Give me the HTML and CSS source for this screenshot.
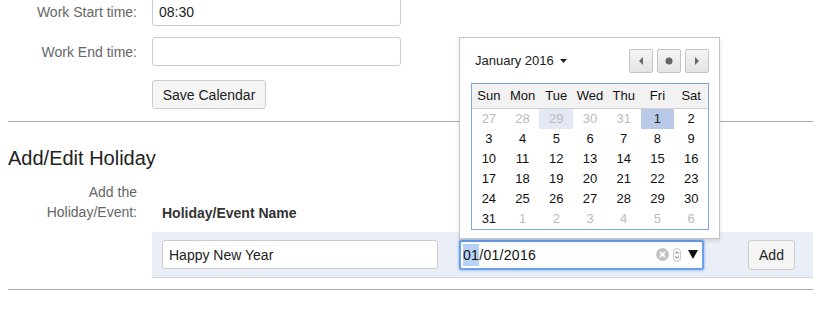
FILE: index.html
```html
<!DOCTYPE html>
<html>
<head>
<meta charset="utf-8">
<link rel="stylesheet" href="styles.css">
</head>
<body>
<div class="page">
  <div class="form-row first">
    <label class="lbl">Work Start time:</label>
    <div class="field"><input class="txt wide" type="text" value="08:30"></div>
  </div>
  <div class="form-row">
    <label class="lbl">Work End time:</label>
    <div class="field"><input class="txt wide" type="text" value=""></div>
  </div>
  <div class="form-row btn-row">
    <span class="lbl"></span>
    <div class="field"><button class="btn save">Save Calendar</button></div>
  </div>
  <hr class="rule top-rule">
  <h2 class="title">Add/Edit Holiday</h2>
  <div class="holiday">
    <div class="lbl two-line">Add the<br>Holiday/Event:</div>
    <div class="tbl">
      <div class="th">Holiday/Event Name</div>
      <div class="tr">
        <input class="txt name" type="text" value="Happy New Year">
        <div class="date-wrap">
          <div class="date"><span class="sel">01</span>/01/2016
            <span class="ctrls">
              <span class="clear"><svg width="13" height="13" viewBox="0 0 12 12"><circle cx="6" cy="6" r="6" fill="#c4c4c4"/><path d="M3.8 3.8 8.2 8.2M8.2 3.8 3.8 8.2" stroke="#fff" stroke-width="1.6"/></svg></span>
              <span class="spin"><svg width="8" height="14" viewBox="0 0 8 14"><rect x="0.5" y="0.5" width="7" height="13" rx="3.5" fill="#fafafa" stroke="#c8c8c8"/><path d="M2.3 5.5 4 3.8 5.7 5.5M2.3 8.5 4 10.2 5.7 8.5" fill="none" stroke="#555" stroke-width="0.9"/></svg></span>
              <span class="drop"><svg width="10" height="9" viewBox="0 0 10 9"><path d="M0 0h10L5 9z" fill="#111"/></svg></span>
            </span>
          </div>
          <div class="popup">
            <div class="pop-head">
              <span class="month">January 2016 <svg width="7" height="4" viewBox="0 0 7 4"><path d="M0 0h7L3.5 4z" fill="#222"/></svg></span>
              <span class="navs">
                <span class="nav"><svg width="6" height="8" viewBox="0 0 6 8"><path d="M5 0v8L1 4z" fill="#666"/></svg></span>
                <span class="nav mid"><svg width="8" height="8" viewBox="0 0 8 8"><circle cx="4" cy="4" r="3.5" fill="#666"/></svg></span>
                <span class="nav"><svg width="6" height="8" viewBox="0 0 6 8"><path d="M1 0v8L5 4z" fill="#666"/></svg></span>
              </span>
            </div>
            <div class="grid">
              <div class="wk head"><span>Sun</span><span>Mon</span><span>Tue</span><span>Wed</span><span>Thu</span><span>Fri</span><span>Sat</span></div>
              <div class="wk"><span class="o">27</span><span class="o">28</span><span class="o hov">29</span><span class="o">30</span><span class="o">31</span><span class="cur">1</span><span>2</span></div>
              <div class="wk"><span>3</span><span>4</span><span>5</span><span>6</span><span>7</span><span>8</span><span>9</span></div>
              <div class="wk"><span>10</span><span>11</span><span>12</span><span>13</span><span>14</span><span>15</span><span>16</span></div>
              <div class="wk"><span>17</span><span>18</span><span>19</span><span>20</span><span>21</span><span>22</span><span>23</span></div>
              <div class="wk"><span>24</span><span>25</span><span>26</span><span>27</span><span>28</span><span>29</span><span>30</span></div>
              <div class="wk"><span>31</span><span class="o">1</span><span class="o">2</span><span class="o">3</span><span class="o">4</span><span class="o">5</span><span class="o">6</span></div>
            </div>
          </div>
        </div>
        <button class="btn add">Add</button>
      </div>
    </div>
  </div>
  <hr class="rule bottom-rule">
</div>
</body>
</html>
```

FILE: styles.css
```css
* { box-sizing: border-box; }
html, body { margin: 0; padding: 0; background: #fff; }
body {
  font-family: "Liberation Sans", Arial, Helvetica, sans-serif;
  font-size: 14px;
  color: #333;
  overflow: hidden;
  width: 813px;
  height: 309px;
}
.page { margin-top: -3px; }
.form-row {
  display: flex;
  align-items: center;
  gap: 15px;
  margin-bottom: 11px;
}
.lbl {
  width: 137px;
  text-align: right;
  color: #666;
  font-size: 14px;
  flex: none;
}
.txt {
  font-family: inherit;
  font-size: 14px;
  color: #222;
  height: 29px;
  border: 1px solid #ccc;
  border-radius: 3px;
  padding: 0 6px;
  background: #fff;
  outline: none;
}
.wide { width: 249px; display: block; }
.btn-row { margin-bottom: 0; margin-top: 14px; }
.btn {
  font-family: inherit;
  font-size: 14px;
  color: #222;
  height: 30px;
  border: 1px solid #ccc;
  border-radius: 3px;
  background: #f5f5f5;
  padding: 0;
  display: block;
  white-space: nowrap;
}
.save { width: 114px; height: 29px; }
.rule {
  border: 0;
  border-top: 1px solid #a8a8a8;
  margin: 0 0 0 8px;
  height: 0;
}
.top-rule { margin-top: 12px; }
.title {
  font-weight: normal;
  font-size: 20px;
  color: #222;
  margin: 24px 0 0 8px;
  line-height: 24px;
}
.holiday {
  display: flex;
  gap: 15px;
  margin-top: 12px;
}
.two-line { line-height: 20px; padding-top: 0; }
.tbl { flex: 1; }
.th {
  font-weight: bold;
  color: #333;
  padding: 22px 0 0 10px;
  line-height: 18px;
  height: 50px;
}
.tr {
  display: flex;
  align-items: center;
  background: #eaeff7;
  border-bottom: 1px solid #d3d9e2;
  height: 46px;
  padding: 0 18px 0 10px;
}
.name { width: 276px; height: 29px; }
.date-wrap { position: relative; margin-left: 21px; }
.date {
  width: 245px;
  height: 30px;
  border: 2px solid #6ba0ea;
  box-shadow: 0 0 2px 1px rgba(120, 170, 240, .6);
  border-radius: 3px;
  background: #fff;
  display: flex;
  align-items: center;
  padding-left: 2px;
  font-size: 14px;
  color: #111;
  letter-spacing: 0.3px;
}
.sel { background: #b5d2f5; padding: 3px 0; }
.ctrls {
  margin-left: auto;
  display: flex;
  align-items: center;
  gap: 4px;
  padding-right: 4px;
}
.ctrls svg { display: block; }
.drop { margin-left: 3px; }
.add { width: 47px; margin-left: 44px; }
.bottom-rule { margin-top: 11px; }

.popup {
  position: absolute;
  left: 0;
  bottom: calc(100% + 1px);
  width: 261px;
  background: #fff;
  border: 1px solid #c6c6c6;
  box-shadow: 0 2px 4px rgba(0,0,0,.12);
  padding: 11px 10px 8px 11px;
  z-index: 5;
}
.pop-head {
  display: flex;
  align-items: center;
  justify-content: space-between;
  height: 24px;
  margin-bottom: 10px;
}
.month { font-size: 13px; color: #222; padding-left: 4px; display: flex; align-items: center; gap: 6px; }
.navs { display: flex; gap: 4px; }
.nav {
  width: 24px;
  height: 24px;
  border: 1px solid #c4c4c4;
  border-radius: 2px;
  background: linear-gradient(#f4f4f4, #e4e4e4);
  display: flex;
  align-items: center;
  justify-content: center;
}
.nav svg { display: block; }
.grid {
  border: 1px solid #77a6ec;
  width: 238px;
  font-size: 13px;
  color: #111;
}
.wk { display: flex; }
.wk span {
  width: 34px;
  height: 20px;
  line-height: 20px;
  text-align: center;
}
.wk.head {
  background: #f2f2f2;
  border-bottom: 1px solid #d0d0d0;
}
.wk.head span { height: 24px; line-height: 24px; font-size: 13px; }
.wk .o { color: #bbb; }
.wk .hov { background: #e2e8f4; }
.wk .cur { background: #b9cae9; color: #222; }
```
